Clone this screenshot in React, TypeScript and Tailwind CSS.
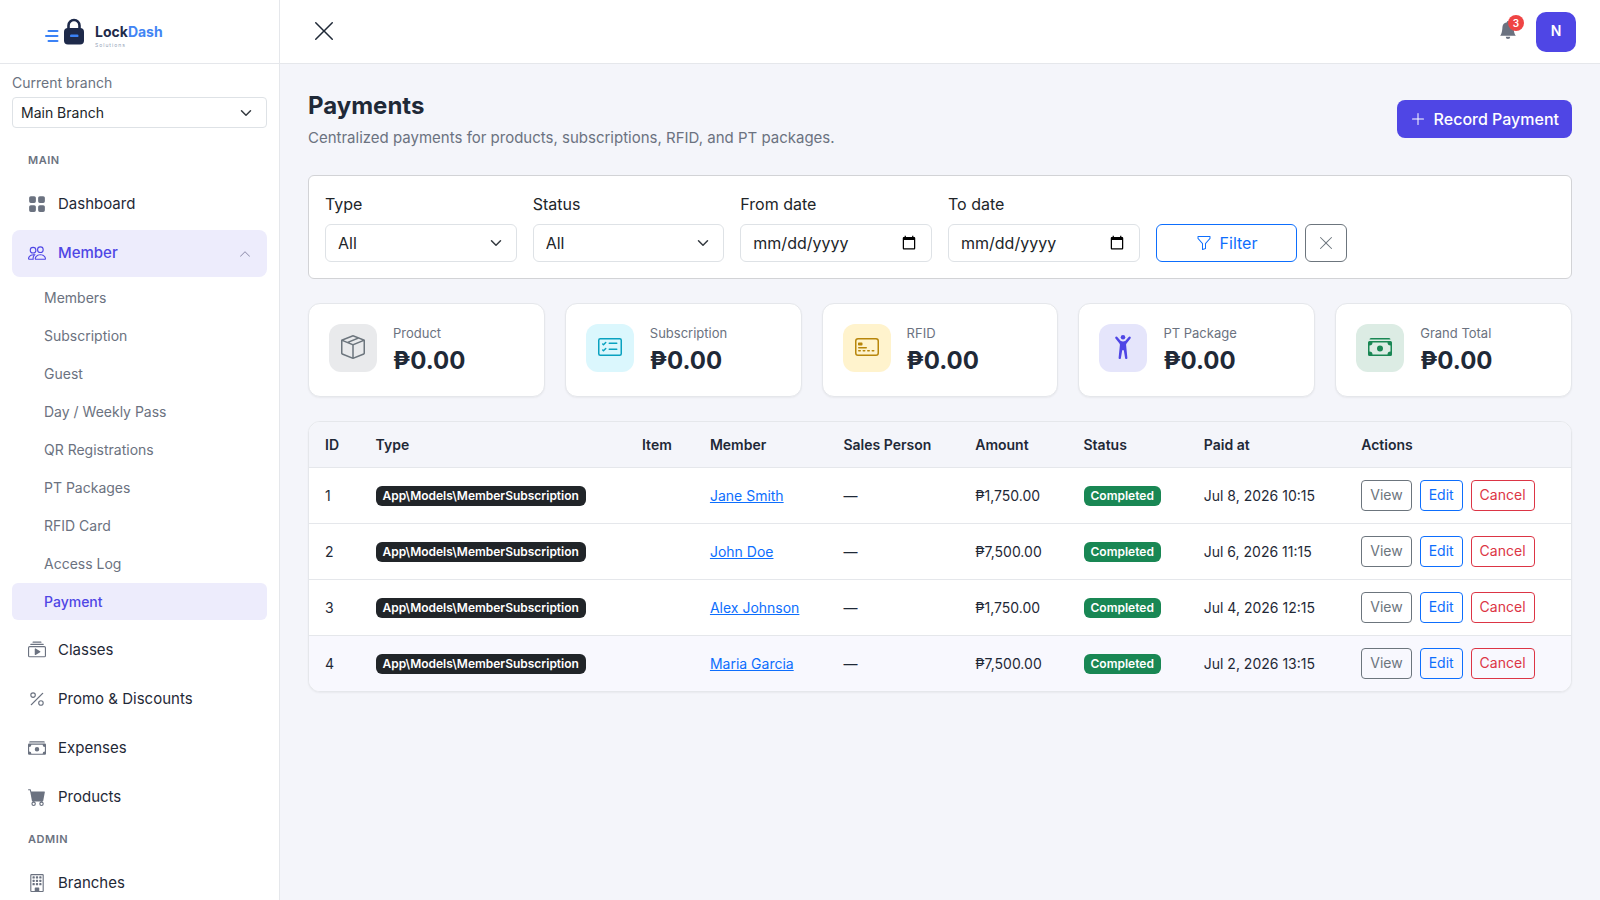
import { useState, type ReactNode } from 'react'
import type { IconType } from 'react-icons'
import {
  BsBellFill,
  BsBoxSeam,
  BsBuilding,
  BsCardChecklist,
  BsCartFill,
  BsCashStack,
  BsChevronUp,
  BsCollectionPlay,
  BsCreditCard2Front,
  BsFunnel,
  BsGridFill,
  BsPeople,
  BsPercent,
  BsPersonArmsUp,
  BsPlusLg,
  BsXLg,
} from 'react-icons/bs'

interface Payment {
  id: number
  type: string
  member: string
  amount: string
  status: string
  paidAt: string
}

interface Stat {
  label: string
  value: string
  icon: IconType
  tone: string
}

const memberLinks = [
  'Members',
  'Subscription',
  'Guest',
  'Day / Weekly Pass',
  'QR Registrations',
  'PT Packages',
  'RFID Card',
  'Access Log',
  'Payment',
]

const stats: Stat[] = [
  { label: 'Product', value: '₱0.00', icon: BsBoxSeam, tone: 'bg-[#e9eaec] text-[#6c757d]' },
  { label: 'Subscription', value: '₱0.00', icon: BsCardChecklist, tone: 'bg-[#dbf7fd] text-[#0aa2c0]' },
  { label: 'RFID', value: '₱0.00', icon: BsCreditCard2Front, tone: 'bg-[#fff3cd] text-[#b8860b]' },
  { label: 'PT Package', value: '₱0.00', icon: BsPersonArmsUp, tone: 'bg-[#e5e5fb] text-[#4f46e5]' },
  { label: 'Grand Total', value: '₱0.00', icon: BsCashStack, tone: 'bg-[#dcece4] text-[#198754]' },
]

const payments: Payment[] = [
  { id: 1, type: 'App\\Models\\MemberSubscription', member: 'Jane Smith', amount: '₱1,750.00', status: 'Completed', paidAt: 'Jul 8, 2026 10:15' },
  { id: 2, type: 'App\\Models\\MemberSubscription', member: 'John Doe', amount: '₱7,500.00', status: 'Completed', paidAt: 'Jul 6, 2026 11:15' },
  { id: 3, type: 'App\\Models\\MemberSubscription', member: 'Alex Johnson', amount: '₱1,750.00', status: 'Completed', paidAt: 'Jul 4, 2026 12:15' },
  { id: 4, type: 'App\\Models\\MemberSubscription', member: 'Maria Garcia', amount: '₱7,500.00', status: 'Completed', paidAt: 'Jul 2, 2026 13:15' },
]

const columns = ['ID', 'Type', 'Item', 'Member', 'Sales Person', 'Amount', 'Status', 'Paid at', 'Actions']

function SelectArrow() {
  return (
    <svg
      viewBox="0 0 16 16"
      className="pointer-events-none absolute top-1/2 right-[13px] h-3 w-4 -translate-y-1/2"
      fill="none"
      stroke="#343a40"
      strokeWidth="2"
      strokeLinecap="round"
      strokeLinejoin="round"
      aria-hidden="true"
    >
      <path d="m2 5 6 6 6-6" />
    </svg>
  )
}

function Logo() {
  return (
    <a href="#" className="flex items-center gap-2.5">
      <svg width="42" height="28" viewBox="0 0 42 28" aria-hidden="true">
        <g stroke="#3b82f6" strokeWidth="2" strokeLinecap="round">
          <path d="M5.5 13h9M3 18h11.5M5.5 23h9" />
        </g>
        <path d="M25.5 11V7.5a5.5 5.5 0 0 1 11 0V11" fill="none" stroke="#1e2a4a" strokeWidth="2.6" />
        <rect x="21" y="10" width="20" height="16.5" rx="4" fill="#1e2a4a" />
        <rect x="27" y="16.5" width="8.5" height="2.6" rx="1.2" fill="#3b82f6" />
      </svg>
      <span className="flex flex-col pt-2">
        <span className="text-sm leading-4 font-bold text-[#1e2a4a]">
          Lock<span className="text-[#4285f4]">Dash</span>
        </span>
        <span className="mt-0.5 text-[5px] leading-[6px] tracking-[1px] text-[#94a3b8]">Solutions</span>
      </span>
    </a>
  )
}

function NavHeading({ children }: { children: ReactNode }) {
  return (
    <h2 className="px-4 pt-2 pb-[11px] text-[11px] leading-4 font-semibold tracking-wider text-[#6b7280] uppercase">
      {children}
    </h2>
  )
}

function NavItem({ icon: Icon, label }: { icon: IconType; label: string }) {
  return (
    <a href="#" className="flex h-[47px] items-center gap-3 rounded-lg px-4 text-[15px] text-[#1f2937]">
      <Icon size={18} className="mb-0.5 text-[#6b7280]" />
      {label}
    </a>
  )
}

function Sidebar() {
  const [open, setOpen] = useState(true)

  return (
    <aside className="sticky top-0 flex h-screen w-[280px] shrink-0 flex-col border-r border-[#e5e7eb] bg-white">
      <div className="flex h-16 shrink-0 items-center border-b border-[#e5e7eb] pl-[43px]">
        <Logo />
      </div>
      <div className="min-h-0 flex-1 overflow-y-auto px-3 [scrollbar-width:none]">
        <label htmlFor="branch" className="mt-2 block text-sm leading-[21px] text-[#6b7280]">
          Current branch
        </label>
        <div className="relative mt-1">
          <select
            id="branch"
            className="h-[31px] w-full appearance-none rounded-sm border border-[#dee2e6] bg-white px-2 text-sm text-[#212529]"
          >
            <option>Main Branch</option>
          </select>
          <SelectArrow />
        </div>
        <nav className="mt-4 flex flex-col gap-0.5">
          <NavHeading>Main</NavHeading>
          <NavItem icon={BsGridFill} label="Dashboard" />
          <div>
            <button
              type="button"
              onClick={() => setOpen(!open)}
              aria-expanded={open}
              className="flex h-[47px] w-full items-center gap-3 rounded-lg bg-[#edecfc] px-4 text-[15px] font-medium text-[#4f46e5]"
            >
              <BsPeople size={18} className="mb-0.5" />
              Member
              <BsChevronUp size={12} className="ml-auto text-[#8b8aa8]" />
            </button>
            {open && (
              <ul className="flex flex-col gap-px pt-0.5 pb-[5px]">
                {memberLinks.map((label) => (
                  <li key={label}>
                    <a
                      href="#"
                      className={
                        label === 'Payment'
                          ? 'flex h-[37px] items-center rounded-md bg-[#edecfc] px-8 text-sm font-medium text-[#4f46e5]'
                          : 'flex h-[37px] items-center rounded-md px-8 text-sm text-[#6b7280]'
                      }
                    >
                      {label}
                    </a>
                  </li>
                ))}
              </ul>
            )}
          </div>
          <NavItem icon={BsCollectionPlay} label="Classes" />
          <NavItem icon={BsPercent} label="Promo & Discounts" />
          <NavItem icon={BsCashStack} label="Expenses" />
          <NavItem icon={BsCartFill} label="Products" />
          <NavHeading>Admin</NavHeading>
          <NavItem icon={BsBuilding} label="Branches" />
        </nav>
      </div>
    </aside>
  )
}

function Topbar() {
  return (
    <header className="flex h-16 items-center justify-between border-b border-[#e5e7eb] bg-white pr-6 pl-8">
      <button type="button" aria-label="Close menu" className="pb-0.5 text-[#1f2937]">
        <BsXLg size={24} />
      </button>
      <div className="flex items-center gap-[19px]">
        <button type="button" aria-label="Notifications" className="relative pb-[3px] text-[#6b7280]">
          <BsBellFill size={18} />
          <span className="absolute -top-1.5 -right-[7px] flex size-4 items-center justify-center rounded-full bg-[#ef4444] text-[10px] font-semibold text-white">
            3
          </span>
        </button>
        <button type="button" className="size-10 rounded-[10px] bg-[#4f46e5] pb-0.5 text-sm font-semibold text-white">
          N
        </button>
      </div>
    </header>
  )
}

function SelectField({ id, label }: { id: string; label: string }) {
  return (
    <div>
      <label htmlFor={id} className="mb-2 block">
        {label}
      </label>
      <div className="relative">
        <select
          id={id}
          className="h-[38px] w-full appearance-none rounded-md border border-[#dee2e6] bg-white px-3 text-[#212529]"
        >
          <option>All</option>
        </select>
        <SelectArrow />
      </div>
    </div>
  )
}

function DateField({ id, label }: { id: string; label: string }) {
  return (
    <div>
      <label htmlFor={id} className="mb-2 block">
        {label}
      </label>
      <input
        id={id}
        type="date"
        className="h-[38px] w-full rounded-md border border-[#dee2e6] bg-white px-3 text-[#212529] [&::-webkit-datetime-edit-day-field]:p-0 [&::-webkit-datetime-edit-month-field]:p-0 [&::-webkit-datetime-edit-text]:p-0 [&::-webkit-datetime-edit-year-field]:p-0"
      />
    </div>
  )
}

function Filters() {
  return (
    <form className="mt-[29px] grid grid-cols-6 items-end gap-4 rounded-md border border-[#d2d3d6] bg-white p-4 text-base text-[#212529]">
      <SelectField id="type" label="Type" />
      <SelectField id="status" label="Status" />
      <DateField id="from" label="From date" />
      <DateField id="to" label="To date" />
      <div className="flex gap-2">
        <button
          type="button"
          className="flex h-[38px] flex-1 items-center justify-center gap-2 rounded-md border border-[#0d6efd] text-[#0d6efd]"
        >
          <BsFunnel size={16} />
          Filter
        </button>
        <button
          type="reset"
          aria-label="Clear filters"
          className="flex h-[38px] w-[42px] items-center justify-center rounded-md border border-[#6c757d] text-[#6c757d]"
        >
          <BsXLg size={16} />
        </button>
      </div>
    </form>
  )
}

function StatCard({ label, value, icon: Icon, tone }: Stat) {
  return (
    <div className="flex items-start gap-4 rounded-xl border border-[#e5e7eb] bg-white p-5 shadow-xs">
      <div className={`flex size-12 shrink-0 items-center justify-center rounded-xl ${tone}`}>
        <Icon size={24} className="mb-0.5" />
      </div>
      <div className="pb-px">
        <div className="text-[13px] leading-[18px] text-[#6b7280]">{label}</div>
        <div className="mt-[5px] text-2xl leading-7 font-bold text-[#1f2937]">{value}</div>
      </div>
    </div>
  )
}

function PaymentsTable() {
  return (
    <div className="mt-6 overflow-hidden rounded-xl border border-[#e5e7eb] bg-white shadow-xs">
      <table className="w-full text-left text-sm text-[#1f2937]">
        <thead>
          <tr className="h-[45px] border-b border-[#e5e7eb] bg-[#f4f5fa]">
            {columns.map((column) => (
              <th key={column} className="px-4 pt-0.5 font-semibold">
                {column}
              </th>
            ))}
          </tr>
        </thead>
        <tbody>
          {payments.map((payment) => (
            <tr key={payment.id} className="h-14 border-b border-[#e5e7eb] last:border-b-0 last:bg-[#f8f8fe]">
              <td className="px-4 pt-0.5">{payment.id}</td>
              <td className="px-4">
                <span className="inline-block rounded-md bg-[#212529] px-[7px] text-xs leading-5 font-semibold text-white">
                  {payment.type}
                </span>
              </td>
              <td className="px-4"></td>
              <td className="px-4 pt-0.5">
                <a href="#" className="text-[#0d6efd] underline">
                  {payment.member}
                </a>
              </td>
              <td className="px-4 pt-0.5">—</td>
              <td className="px-4 pt-0.5">{payment.amount}</td>
              <td className="px-4">
                <span className="inline-block rounded-md bg-[#198754] px-[7px] text-xs leading-5 font-semibold text-white">
                  {payment.status}
                </span>
              </td>
              <td className="px-4 pt-0.5">{payment.paidAt}</td>
              <td className="px-4">
                <div className="flex gap-2">
                  <button type="button" className="h-[31px] rounded-sm border border-[#6c757d] px-2 text-[#6c757d]">
                    View
                  </button>
                  <button type="button" className="h-[31px] rounded-sm border border-[#0d6efd] px-2 text-[#0d6efd]">
                    Edit
                  </button>
                  <button type="button" className="h-[31px] rounded-sm border border-[#dc3545] px-2 text-[#dc3545]">
                    Cancel
                  </button>
                </div>
              </td>
            </tr>
          ))}
        </tbody>
      </table>
    </div>
  )
}

export default function App() {
  return (
    <div className="flex min-h-screen bg-[#f4f5fa] font-['Inter',sans-serif] text-[#1f2937]">
      <Sidebar />
      <div className="min-w-0 flex-1">
        <Topbar />
        <main className="p-7">
          <div className="flex items-center justify-between">
            <div>
              <h1 className="text-2xl leading-7 font-bold">Payments</h1>
              <p className="mt-2.5 text-[15px] leading-4 text-[#6b7280]">
                Centralized payments for products, subscriptions, RFID, and PT packages.
              </p>
            </div>
            <button
              type="button"
              className="flex h-[38px] items-center gap-2 rounded-lg bg-[#4f46e5] px-[13px] text-base font-medium text-white"
            >
              <BsPlusLg size={16} />
              Record Payment
            </button>
          </div>
          <Filters />
          <div className="mt-6 grid grid-cols-5 gap-5">
            {stats.map((stat) => (
              <StatCard key={stat.label} {...stat} />
            ))}
          </div>
          <PaymentsTable />
        </main>
      </div>
    </div>
  )
}
